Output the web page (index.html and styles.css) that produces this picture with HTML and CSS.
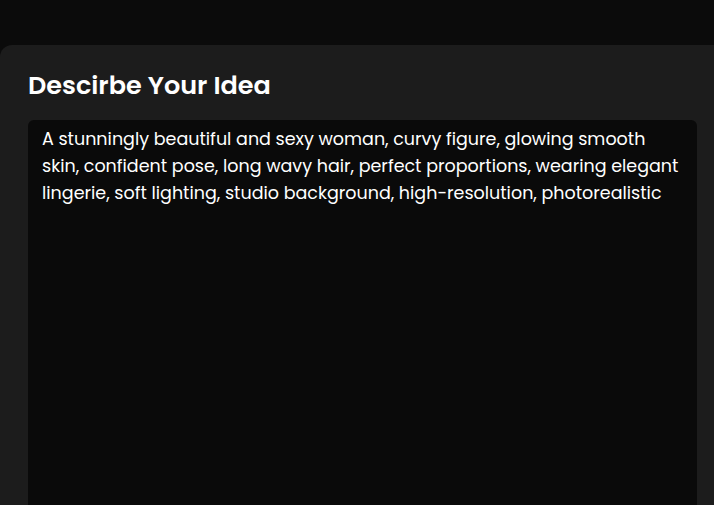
FILE: index.html
```html
<!DOCTYPE html>
<html lang="en">
<head>
<meta charset="utf-8">
<title>Describe Your Idea</title>
<link rel="stylesheet" href="styles.css">
</head>
<body>
<main class="page">
  <section class="card">
    <h2 class="card-title">Descirbe Your Idea</h2>
    <div class="prompt-box">
      <p class="prompt-text">A stunningly beautiful and sexy woman, curvy figure, glowing smooth skin, confident pose, long wavy hair, perfect proportions, wearing elegant lingerie, soft lighting, studio background, high-resolution, photorealistic</p>
    </div>
  </section>
</main>
</body>
</html>
```

FILE: styles.css
```css
html, body {
  margin: 0;
  padding: 0;
  background: #0b0b0b;
  height: 100%;
  overflow: hidden;
}
body {
  font-family: Poppins, Inter, "Noto Sans", sans-serif;
  color: #ffffff;
}
.page {
  box-sizing: border-box;
  height: 100%;
  padding-top: 45px;
  display: flex;
  flex-direction: column;
}
.card {
  flex: 1;
  width: 725px;
  box-sizing: border-box;
  background: #1c1c1c;
  border-radius: 12px 12px 0 0;
  padding: 23px 28px 0 28px;
  display: flex;
  flex-direction: column;
}
.card-title {
  margin: 0 0 18px 0;
  font-size: 25.5px;
  font-weight: 600;
  line-height: 34px;
  letter-spacing: 0;
}
.prompt-box {
  flex: 1;
  background: #0a0a0a;
  border-radius: 6px 6px 0 0;
  padding: 6px 12px 0 14px;
}
.prompt-text {
  margin: 0;
  font-size: 17.5px;
  line-height: 27px;
  font-weight: 400;
}
```
